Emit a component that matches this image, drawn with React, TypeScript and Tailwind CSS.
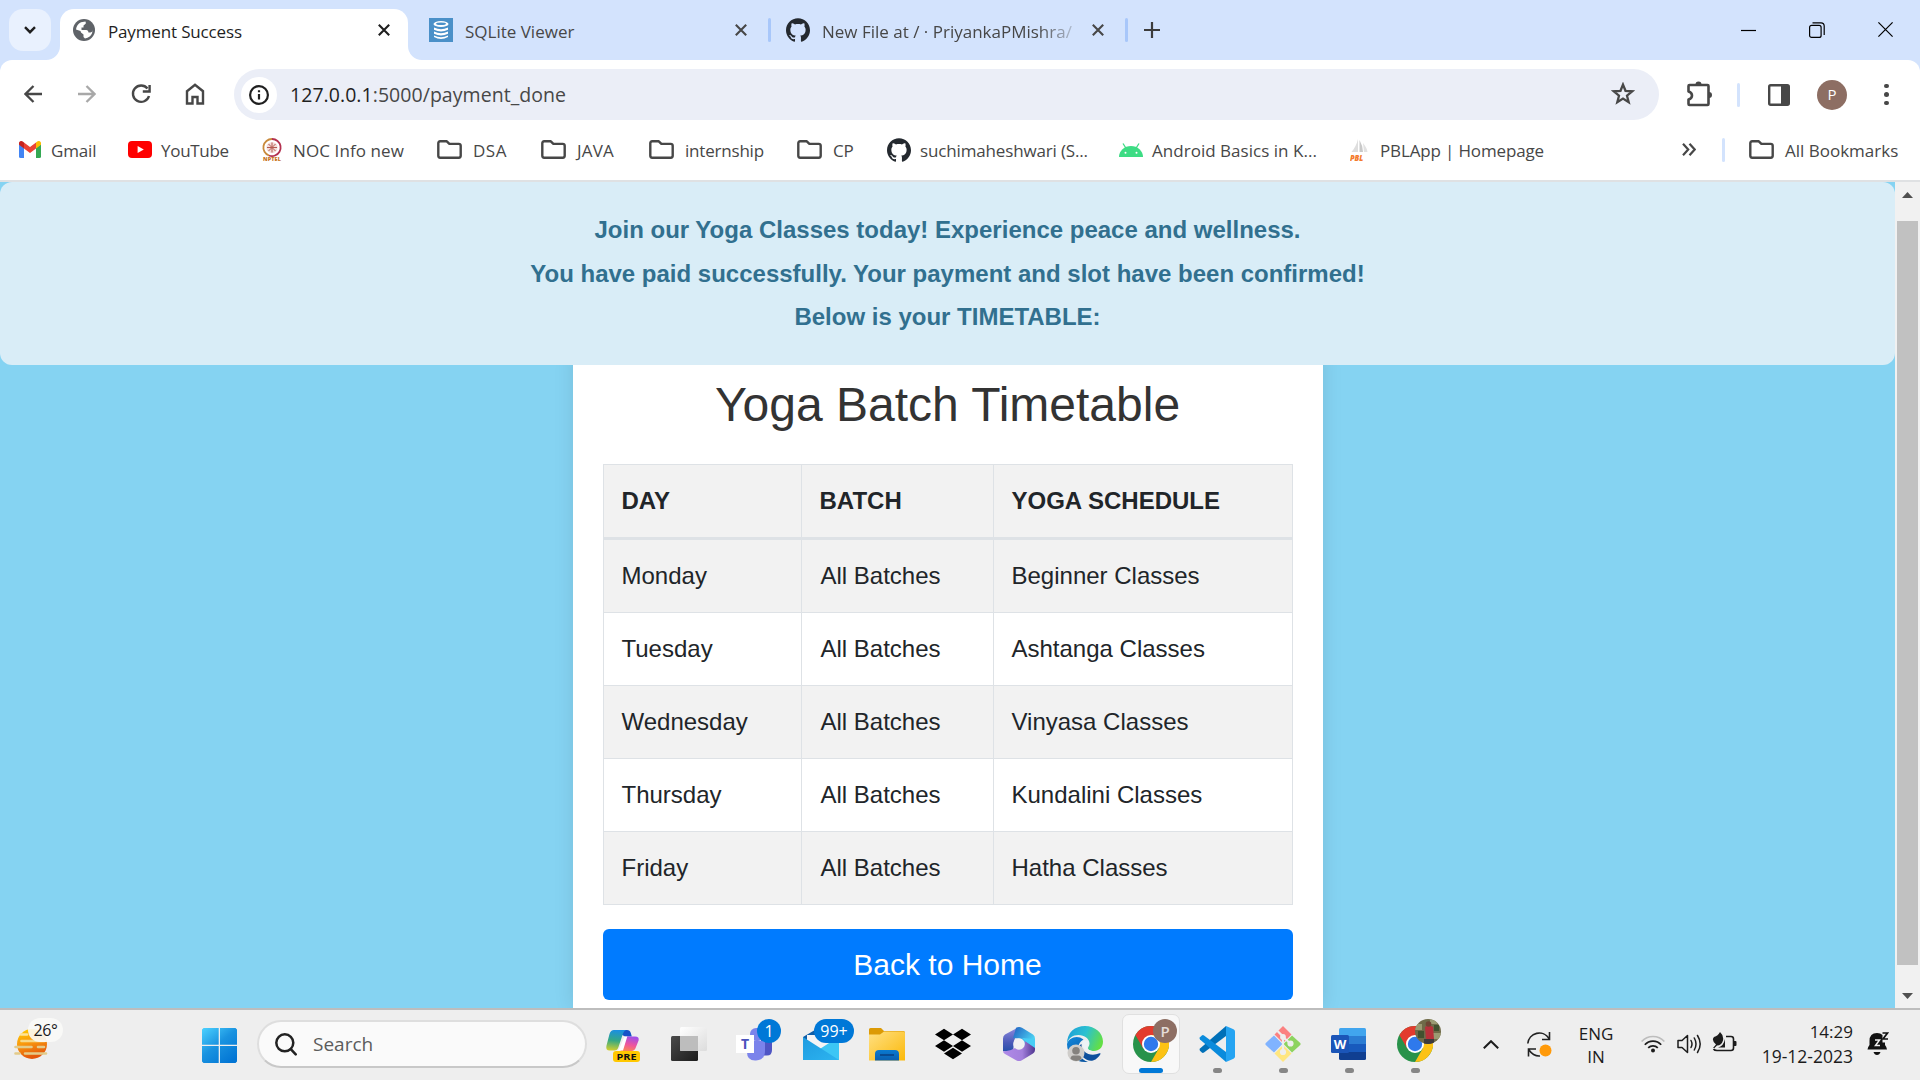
import React from "react";
import type { ReactNode } from "react";
import { SiGithub, SiDropbox } from "react-icons/si";

/* ---------- Small drawings ---------- */

function Cross({ className }: { className: string }) {
  return (
    <svg viewBox="0 0 12 12" className={className} fill="none" stroke="currentColor" strokeWidth="2.1">
      <path d="M.8.8l10.4 10.4M11.2.8L.8 11.2" />
    </svg>
  );
}

function GlobeIcon() {
  return (
    <svg viewBox="0 0 22 22" className="size-[22px] shrink-0">
      <circle cx="11" cy="11" r="11" fill="#5f6368" />
      <path d="M3 10.500Q3.500 5.500 8 3.300L12.500 2.500 13 4.500 10.500 6.500V8.500H8.500V11H13.500Q15.500 11 15.500 13.500H17.500Q19.500 13 19.500 11 19.500 16.500 14.500 18.700L12 19.500 10.500 18V15.500L8 13.500 7.500 12z" fill="#fff" />
      <path d="M13 3.500Q18 5 19.300 10L16.500 9.500 14 8.500 12.500 6.500z" fill="#5f6368" />
    </svg>
  );
}

function Folder() {
  return (
    <svg viewBox="0 0 25 19" className="h-[19px] w-[25px] shrink-0" fill="none" stroke="#474747" strokeWidth="2.4" strokeLinejoin="round">
      <path d="M1.300 3.200V15.800q0 1.900 1.900 1.900H21.800q1.900 0 1.900-1.900V5.800q0-1.900-1.900-1.900H12.400L9.800 1.300H3.200q-1.900 0-1.900 1.900z" />
    </svg>
  );
}

function GmailIcon() {
  return (
    <svg viewBox="0 0 22 17" className="h-[17px] w-[22px]">
      <path d="M0 3v12.500Q0 17 1.500 17H5V7z" fill="#4285f4" />
      <path d="M22 3v12.500q0 1.500-1.500 1.500H17V7z" fill="#34a853" />
      <path d="M17 1.500V7.500l5-3.800V2.200C22 .2 19.800-.7 18.200.6z" fill="#fbbc04" />
      <path d="M5 7.500V1.500l6 4.500 6-4.500v6L11 12z" fill="#ea4335" />
      <path d="M0 2.200v1.500l5 3.800v-6L3.800.6C2.200-.7 0 .2 0 2.200z" fill="#c5221f" />
    </svg>
  );
}

function YouTubeIcon() {
  return (
    <svg viewBox="0 0 24 17" className="h-[17px] w-[24px]">
      <rect width="24" height="17" rx="4" fill="#f00" />
      <path d="M9.600 4.900v7.200l6.200-3.600z" fill="#fff" />
    </svg>
  );
}

function NptelIcon() {
  return (
    <svg viewBox="0 0 22 24" className="h-[24px] w-[22px] overflow-visible">
      <path d="M11 1a8.500 8.500 0 0 0-3 16.500" fill="none" stroke="#c98a3c" strokeWidth="1.800" />
      <path d="M11 1a8.500 8.500 0 0 1 3 16.500q-3 1.200-6 0" fill="none" stroke="#b3304f" strokeWidth="1.800" />
      <circle cx="11" cy="9.500" r="5.600" fill="#f3dcd9" />
      <path d="M11 4.500v10M6 9.500h10M7.500 6l7 7M14.500 6l-7 7" stroke="#b5594f" strokeWidth="1" />
      <text x="11" y="23.400" textAnchor="middle" textLength="18" lengthAdjust="spacingAndGlyphs" className="font-['Open_Sans'] text-[5.500px] font-extrabold" fill="#c8741c">NPTEL</text>
    </svg>
  );
}

function AndroidIcon() {
  return (
    <svg viewBox="0 0 24 14" className="h-[14px] w-[24px]">
      <path d="M0 14a12 11 0 0 1 24 0z" fill="#3ddc84" />
      <path d="M4 .5l3.200 5M20 .5l-3.200 5" stroke="#3ddc84" strokeWidth="1.300" />
      <circle cx="6.500" cy="9.700" r="1" fill="#fff" />
      <circle cx="17.500" cy="9.700" r="1" fill="#fff" />
    </svg>
  );
}

function PblIcon() {
  return (
    <svg viewBox="0 0 18 22" className="h-[22px] w-[18px]">
      <path d="M8 0v13H1.500Q6 8 8 0z" fill="#dedede" />
      <path d="M9.500 1q3.500 6 3.500 12H9.500z" fill="#c9c9c9" />
      <path d="M13 4q4 5 4.500 9H14z" fill="#e2e2e2" />
      <text x="0" y="21.500" textLength="13" lengthAdjust="spacingAndGlyphs" className="font-['Open_Sans'] text-[8px] font-extrabold italic" fill="#f47a2c">PBL</text>
    </svg>
  );
}

function WeatherIcon() {
  return (
    <svg viewBox="0 0 36 32" className="h-[32px] w-[36px]">
      <defs>
        <linearGradient id="sun" x1="0" y1="0" x2=".3" y2="1">
          <stop offset="0" stopColor="#ffcf00" />
          <stop offset=".5" stopColor="#f99a0e" />
          <stop offset="1" stopColor="#e4570c" />
        </linearGradient>
      </defs>
      <circle cx="18" cy="16" r="15" fill="url(#sun)" />
      <g stroke="#e3cb8a" strokeWidth="2.600" strokeLinecap="round">
        <path d="M7 6.500h6" stroke="#fde59a" />
        <path d="M7.500 13h23" stroke="#f7d98a" />
        <path d="M1.500 19h16M24 19h6M1.500 25.500h4M11 25.500h21" />
      </g>
    </svg>
  );
}

function WindowsLogo() {
  return (
    <svg viewBox="0 0 35 35" className="h-[35px] w-[35px]">
      <defs>
        <linearGradient id="win" gradientUnits="userSpaceOnUse" x1="0" y1="0" x2="28" y2="35">
          <stop offset="0" stopColor="#4cd2ff" />
          <stop offset=".5" stopColor="#1a93e0" />
          <stop offset="1" stopColor="#0275d4" />
        </linearGradient>
      </defs>
      <path d="M1.500 0H16.700V16.700H0V1.500zM18 0h15.500L35 1.500V16.700H18zM0 18H16.700V35H1.500L0 33.500zM18 18H35V33.500L33.500 35H18z" fill="url(#win)" />
    </svg>
  );
}

function CopilotIcon() {
  return (
    <svg viewBox="0 0 36 36" className="h-[36px] w-[36px]">
      <defs>
        <linearGradient id="cpA" x1=".3" y1="0" x2=".2" y2="1">
          <stop offset="0" stopColor="#1b8fe0" />
          <stop offset=".5" stopColor="#35a883" />
          <stop offset="1" stopColor="#d5cf2c" />
        </linearGradient>
        <linearGradient id="cpB" x1=".6" y1="0" x2=".3" y2="1">
          <stop offset="0" stopColor="#a04ee8" />
          <stop offset=".55" stopColor="#f0569b" />
          <stop offset="1" stopColor="#fb8b50" />
        </linearGradient>
      </defs>
      <path d="M8 4h14q3 0 3.800 3l1 3.500H20z" fill="#1752c8" />
      <path d="M20 10.500h10q4.500 0 3.600 4L31 21q-1.200 4-4.600 4H14q3 0 4-4z" fill="url(#cpB)" />
      <path d="M9 4h12q-2 .5-3 3.500L13.500 21q-1 3.500-4 3.500H4.600Q.6 24.500 1.400 20L4.500 8Q5.700 4 9 4z" fill="url(#cpA)" />
      <path d="M19.500 10.500h2.800L18 24.500h-6q2 0 3-3.500z" fill="#fff" />
      <rect x="8" y="25" width="27" height="11" rx="3" fill="#ffc800" />
      <text x="21.500" y="33.800" textAnchor="middle" textLength="20" lengthAdjust="spacingAndGlyphs" className="font-['Open_Sans'] text-[9px] font-bold" fill="#111">PRE</text>
    </svg>
  );
}

function TaskViewIcon() {
  return (
    <svg viewBox="0 0 36 36" className="h-[36px] w-[36px]">
      <defs>
        <linearGradient id="tvA" x1="0" y1="0" x2="1" y2="1">
          <stop offset="0" stopColor="#4a4a4a" />
          <stop offset="1" stopColor="#1c1c1c" />
        </linearGradient>
        <linearGradient id="tvB" x1="0" y1="0" x2="1" y2="1">
          <stop offset="0" stopColor="#fff" />
          <stop offset="1" stopColor="#dcdcdc" />
        </linearGradient>
      </defs>
      <rect x="0" y="10" width="27" height="25" rx="1.500" fill="url(#tvA)" />
      <rect x="9" y="1" width="27" height="24" rx="1.500" fill="url(#tvB)" />
      <path d="M9 10H27V25H10.500Q9 25 9 23.500z" fill="#bdbdbd" />
    </svg>
  );
}

function TeamsIcon() {
  return (
    <svg viewBox="0 0 36 36" className="h-[36px] w-[36px] overflow-visible">
      <rect x="13" y="2" width="14" height="13" rx="6" fill="#7b83eb" />
      <path d="M24 12H35V24q0 5.500-5 5.500h-6z" fill="#4f55c4" />
      <path d="M10 15H28V25q0 9-9 9.500T10 26z" fill="#7b83eb" />
      <rect x="-1" y="9" width="18" height="18" fill="#fff" />
      <text x="8" y="23" textAnchor="middle" className="font-['Open_Sans'] text-[14px] font-bold" fill="#4b53bc">T</text>
    </svg>
  );
}

function MailIcon() {
  return (
    <svg viewBox="0 0 36 36" className="h-[36px] w-[36px]">
      <defs>
        <linearGradient id="mailA" x1="0" y1="0" x2="1" y2="1">
          <stop offset="0" stopColor="#1f9be0" />
          <stop offset="1" stopColor="#2cb4f0" />
        </linearGradient>
      </defs>
      <path d="M0 11L17 1 36 11V20H0z" fill="#0f5ea8" />
      <path d="M4 9H33V20L18 25 4 14z" fill="#f4f4f6" />
      <path d="M36 10.500V34H0z" fill="#3cc6f5" />
      <path d="M0 11L36 34H0z" fill="url(#mailA)" />
    </svg>
  );
}

function ExplorerIcon() {
  return (
    <svg viewBox="0 0 36 36" className="h-[36px] w-[36px]">
      <defs>
        <linearGradient id="fe" x1="0" y1="0" x2="1" y2="1">
          <stop offset="0" stopColor="#ffe083" />
          <stop offset="1" stopColor="#fbb90a" />
        </linearGradient>
        <linearGradient id="feB" x1="0" y1="0" x2="0" y2="1">
          <stop offset="0" stopColor="#0a7ad0" />
          <stop offset="1" stopColor="#0a5fb0" />
        </linearGradient>
      </defs>
      <path d="M0 3.500Q0 2 1.500 2H12l3 3H34.500Q36 5 36 6.500V12H0z" fill="#dc9a05" />
      <path d="M0 8.500H11L15 5.500H34.500Q36 5.500 36 7V34.500H0z" fill="url(#fe)" />
      <path d="M6 34.500V28q0-4 4-4H26q4 0 4 4v6.500z" fill="url(#feB)" />
      <path d="M11 29H25" stroke="#0a3f80" strokeWidth="1.500" />
    </svg>
  );
}

function M365Icon() {
  return (
    <svg viewBox="0 0 36 36" className="h-[36px] w-[36px]">
      <defs>
        <linearGradient id="m1" x1="0" y1="0" x2="0" y2="1">
          <stop offset="0" stopColor="#8f8be0" />
          <stop offset=".6" stopColor="#4a5ab8" />
          <stop offset="1" stopColor="#1f4ea8" />
        </linearGradient>
        <linearGradient id="m2" x1="0" y1="0" x2="1" y2=".7">
          <stop offset="0" stopColor="#1f5fc0" />
          <stop offset="1" stopColor="#52e0fa" />
        </linearGradient>
        <linearGradient id="m3" x1="0" y1="0" x2="1" y2="0">
          <stop offset="0" stopColor="#b08be8" />
          <stop offset=".6" stopColor="#a37fdc" />
          <stop offset="1" stopColor="#4f3690" />
        </linearGradient>
      </defs>
      <path d="M18 1L4 8.500Q2 10 2 12.500V25l10 2L13 15z" fill="url(#m1)" />
      <path d="M15 2q3-2 6-.3L32 8.500q2 1.500 2 4V23L23 20l-2-7-9-1z" fill="url(#m2)" />
      <path d="M2 25q6 1 12-3l9-1 1-6 10 6v3q0 2-2 3.500L20.500 34.500q-2.500 1-5 0L4 28Q2 27 2 25z" fill="url(#m3)" />
      <path d="M34 13V22L24 15l-3-3z" fill="#48cdf5" />
      <circle cx="18" cy="18" r="5.800" fill="#f0f0f2" />
    </svg>
  );
}

function EdgeIcon() {
  return (
    <svg viewBox="0 0 36 36" className="h-[36px] w-[36px] overflow-visible">
      <defs>
        <linearGradient id="eA" x1="0" y1=".2" x2="1" y2=".5">
          <stop offset="0" stopColor="#1e9fd8" />
          <stop offset=".5" stopColor="#2bc1d0" />
          <stop offset="1" stopColor="#63df45" />
        </linearGradient>
        <linearGradient id="eB" x1="0" y1="0" x2=".6" y2="1">
          <stop offset="0" stopColor="#1188dd" />
          <stop offset="1" stopColor="#0c59a4" />
        </linearGradient>
      </defs>
      <path d="M0 18C0 6 8 0 18 0s18 7 18 15.500c0 6-4 9.500-9 9.500-4.500 0-6-1.800-6-3s1.500-2 1.500-4.500c0-4.500-5-8.500-11-8.500C5.500 9 1.500 12 0 18z" fill="url(#eA)" />
      <path d="M0 18c0 10.500 8 18 18 18h3C13 33 11 27 11 23q0-6.500 5.500-9.500C10 8 1.500 12 0 18z" fill="url(#eB)" />
      <path d="M12 21c0 9 8 15 14 13.500 3.500-1 6-4 7.500-6.500q.5-1-1-.8C24 31 14 27 14.500 18q-2.500 1-2.500 3z" fill="#0d4f9c" />
      <path d="M15.500 15q4-2 6 1 .5 2.500-1 4.500-1.500 2.500 2.500 4l4 .8q-6 1.500-9-1.800-3.500-4-2.500-8.500z" fill="#eef3f6" />
      <circle cx="9" cy="27" r="8.500" fill="#cfcdca" />
      <circle cx="9" cy="24.800" r="3.800" fill="#85827e" />
      <path d="M3.500 33q0-3.500 3-3.500h5q3 0 3 3.500-5 4-11 0z" fill="#85827e" />
    </svg>
  );
}

function ChromeIcon() {
  return (
    <svg viewBox="0 0 36 36" className="h-[36px] w-[36px]">
      <circle cx="18" cy="18" r="18" fill="#28924a" />
      <path d="M33.590 9A18 18 0 0 1 18 36L25.800 22.500 18 9z" fill="#fcc214" />
      <path d="M2.410 9A18 18 0 0 1 33.590 9H18L10.200 22.500z" fill="#e33b2e" />
      <circle cx="18" cy="18" r="9" fill="#fff" />
      <circle cx="18" cy="18" r="7.200" fill="#2f79ec" />
    </svg>
  );
}

function VSCodeIcon() {
  return (
    <svg viewBox="0 0 36 36" className="h-[36px] w-[36px]">
      <path d="M27 0L1 22.500q-1 1.200 0 2.300l1.800 1.800q1 .8 2.200 0L27 10z" fill="#0070b8" />
      <path d="M27 36L1 13.500q-1-1.200 0-2.300L2.800 9.400Q3.800 8.600 5 9.400L27 26z" fill="#0a8bdc" />
      <path d="M27 0l7.500 3.200Q36 4 36 5.500v25q0 1.500-1.500 2.300L27 36z" fill="#25a4f2" />
    </svg>
  );
}

function GitIcon() {
  return (
    <svg viewBox="0 0 36 36" className="h-[36px] w-[36px]">
      <path d="M18 0l8.500 8.500L18 17 9.500 8.500z" fill="#fb8181" />
      <path d="M9 9.500l8.500 8.500L9 26.500.5 18.800v-1.600z" fill="#80b3ff" />
      <path d="M27 9.500l8.500 7.700v1.600L27 26.500 18.500 18z" fill="#8dd35f" />
      <path d="M18 19l8.500 8.500L18 36l-8.500-8.500z" fill="#ffe680" />
      <g stroke="#eee" strokeWidth="2.200" fill="#eee">
        <path d="M12.500 5L18 10.500V27M18 11l8 7" fill="none" />
        <circle cx="18" cy="11" r="1.800" />
        <circle cx="18" cy="26" r="2" />
        <circle cx="25.500" cy="17.500" r="2" />
      </g>
    </svg>
  );
}

function WordIcon() {
  return (
    <svg viewBox="0 0 36 36" className="h-[36px] w-[36px]">
      <path d="M8 3.500Q8 2 9.500 2h24Q35 2 35 3.500V10H8z" fill="#41a5ee" />
      <path d="M8 10H35v8H8z" fill="#2b7cd3" />
      <path d="M8 18H35v8H8z" fill="#185abd" />
      <path d="M8 26H35v6.500q0 1.500-1.500 1.500h-24Q8 34 8 32.500z" fill="#103f91" />
      <rect x="0" y="9" width="18" height="18" rx="1.500" fill="#1b55b8" />
      <text x="9" y="22.800" textAnchor="middle" className="font-['Open_Sans'] text-[13px] font-bold" fill="#fff">W</text>
    </svg>
  );
}

/* ---------- Browser chrome ---------- */

function TabStrip() {
  return (
    <div className="flex h-[60px] bg-[#d3e3fd] text-[17px] text-[#474747]">
      <div className="mt-[9px] ml-[9px] flex h-[42px] w-[42px] items-center justify-center rounded-[14px] bg-[#e9f1fe]">
        <svg viewBox="0 0 12 8" className="h-[8px] w-[12px]" fill="none" stroke="#1f1f1f" strokeWidth="2.4">
          <path d="M1 1.200l5 5 5-5" />
        </svg>
      </div>
      <svg viewBox="0 0 14 14" className="ml-[-5px] h-[14px] w-[14px] self-end">
        <path d="M14 0V14H0A14 14 0 0 0 14 0z" fill="#fff" />
      </svg>
      <div className="mt-[9px] flex h-[51px] w-[348px] items-center rounded-t-[14px] bg-white pb-[9px] pl-[13px] text-[#1f1f1f]">
        <GlobeIcon />
        <span className="mt-[3px] ml-[13px] w-[222px] tracking-[-0.15px] whitespace-nowrap">Payment Success</span>
        <Cross className="ml-[48px] size-[12px]" />
      </div>
      <svg viewBox="0 0 14 14" className="h-[14px] w-[14px] self-end">
        <path d="M0 0V14H14A14 14 0 0 1 0 0z" fill="#fff" />
      </svg>
      <div className="ml-[7px] flex h-[60px] w-[341px] items-center">
        <svg viewBox="0 0 24 24" className="size-[24px] shrink-0">
          <rect width="24" height="24" fill="#4a90c8" />
          <ellipse cx="12" cy="6" rx="7.500" ry="3" fill="#fff" />
          <path d="M5 9.500q7 3.600 14 0v2.300q-7 3.600-14 0zM5 13.500q7 3.600 14 0v2.300q-7 3.600-14 0zM5 17.500q7 3.600 14 0v1.500q-7 4-14 0z" fill="#fff" />
          <ellipse cx="12" cy="5.800" rx="5" ry="1.200" fill="#4a90c8" />
        </svg>
        <span className="mt-[3px] ml-[12px] w-[258px] shrink-0 whitespace-nowrap">SQLite Viewer</span>
        <Cross className="ml-[12px] size-[12px] shrink-0" />
        <span className="ml-[21px] h-[24px] w-[3px] shrink-0 rounded-full bg-[#a8c7fa]" />
      </div>
      <div className="ml-[16px] flex h-[60px] items-center">
        <SiGithub className="size-[24px] text-[#24292f]" />
        <span className="mt-[3px] ml-[12px] w-[251px] overflow-hidden whitespace-nowrap [mask-image:linear-gradient(to_right,black_215px,transparent_262px)]">
          New File at / · PriyankaPMishra/
        </span>
        <Cross className="ml-[19px] size-[12px]" />
        <span className="ml-[21px] h-[24px] w-[3px] rounded-full bg-[#a8c7fa]" />
        <svg viewBox="0 0 16 16" className="ml-[16px] size-[16px]" stroke="#3c3c3c" strokeWidth="2.200">
          <path d="M8 0v16M0 8h16" />
        </svg>
      </div>
      <div className="mr-[27px] ml-auto flex h-[59px] items-center gap-[53px] text-black">
        <svg viewBox="0 0 15 16" className="h-[16px] w-[15px]" stroke="currentColor" strokeWidth="1.200">
          <path d="M0 8.500h15" />
        </svg>
        <svg viewBox="0 0 16 16" className="size-[16px]" fill="none" stroke="currentColor" strokeWidth="1.200">
          <rect x=".6" y="3.400" width="11.500" height="12" rx="2" />
          <path d="M3.500.9h8.500q3.200 0 3.200 3.200v9" />
        </svg>
        <svg viewBox="0 0 15 15" className="size-[15px]" stroke="currentColor" strokeWidth="1.200">
          <path d="M.4.4l14.200 14.200M14.600.4L.4 14.600" />
        </svg>
      </div>
    </div>
  );
}

function Toolbar() {
  return (
    <div className="bg-[#d3e3fd]">
      <div className="flex h-[69px] items-center rounded-t-[12px] bg-white text-[#474747]">
        <div className="ml-[24px] flex gap-[36px]">
          <svg viewBox="0 0 18 18" className="size-[18px]" fill="none" stroke="currentColor" strokeWidth="2.300">
            <path d="M18 9H1.500M9.500 1L1.500 9l8 8" />
          </svg>
          <svg viewBox="0 0 18 18" className="size-[18px]" fill="none" stroke="#a8a8a8" strokeWidth="2.300">
            <path d="M0 9h16.500M8.500 1l8 8-8 8" />
          </svg>
          <svg viewBox="0 0 18 18" className="size-[18px] overflow-visible" fill="none" stroke="currentColor" strokeWidth="2.400">
            <path d="M15.500 3.500A8.200 8.200 0 1 0 17 11" />
            <path d="M17.600 0V6.500H10.800" />
          </svg>
          <svg viewBox="0 0 18 20" className="-mt-px h-[20px] w-[18px] overflow-visible" fill="none" stroke="currentColor" strokeWidth="2.400">
            <path d="M1 7.200L9 .8l8 6.400V19.500H11.500v-6.500h-5v6.500H1z" />
          </svg>
        </div>
        <div className="ml-[30px] flex h-[51px] w-[1425px] items-center rounded-full bg-[#ebeef7] pl-[7px]">
          <div className="flex size-[36px] items-center justify-center rounded-full bg-white">
            <svg viewBox="0 0 20 20" className="size-[20px]" fill="none" stroke="#1f1f1f" strokeWidth="2.200">
              <circle cx="10" cy="10" r="8.900" />
              <path d="M10 9v5.500M10 5.300v2" />
            </svg>
          </div>
          <span className="ml-[13px] text-[19.5px] tracking-[0.05px] text-[#474747]">
            <span className="text-[#1f1f1f]">127.0.0.1</span>:5000/payment_done
          </span>
          <svg viewBox="0 0 24 23" className="mr-[24px] ml-auto h-[23px] w-[24px] -translate-y-px" fill="none" stroke="currentColor" strokeWidth="2.300">
            <path d="M12 2.600L14.500 8.800 21.200 9.300 16 13.700 17.700 20.200 12 16.600 6.300 20.200 8 13.700 2.800 9.300 9.500 8.800z" />
          </svg>
        </div>
        <svg viewBox="0 0 26 26" className="ml-[28px] size-[26px] -translate-y-px" fill="none" stroke="currentColor" strokeWidth="2.600" strokeLinejoin="round">
          <path d="M2.500 4H20.500q1 0 1 1V23q0 1-1 1H2.500q-1 0-1-1V18.500q3.500-1 3.500-4t-3.500-4V5q0-1 1-1z" />
          <path d="M8.500 3.500a3 3 0 0 1 6 0zM22 11a3 3 0 0 1 0 6z" fill="currentColor" stroke="none" />
        </svg>
        <span className="ml-[24px] h-[24px] w-[3px] rounded-full bg-[#d3e3fd]" />
        <svg viewBox="0 0 22 22" className="ml-[28px] size-[22px]" fill="none" stroke="currentColor" strokeWidth="2.400">
          <rect x="1.200" y="1.200" width="19.600" height="19.600" rx="1.500" />
          <path d="M13 1h8v20h-8z" fill="currentColor" stroke="none" />
        </svg>
        <div className="ml-[27px] flex size-[30px] items-center justify-center rounded-full bg-[#8d6e63] text-[15px] text-white">P</div>
        <div className="ml-[37px] flex flex-col gap-[4px]">
          <span className="size-[4.500px] rounded-full bg-[#474747]" />
          <span className="size-[4.500px] rounded-full bg-[#474747]" />
          <span className="size-[4.500px] rounded-full bg-[#474747]" />
        </div>
      </div>
    </div>
  );
}

function Bookmark({ icon, className, children }: { icon: ReactNode; className: string; children: ReactNode }) {
  return (
    <div className={"flex shrink-0 items-center whitespace-nowrap " + className}>
      {icon}
      <span className="mt-[2px]">{children}</span>
    </div>
  );
}

function BookmarksBar() {
  return (
    <div className="flex h-[53px] items-center border-b-2 border-[#dfe1e3] bg-white pb-[10px] text-[17px] tracking-[-0.15px] text-[#474747]">
      <Bookmark icon={<GmailIcon />} className="ml-[19px] w-[109px] gap-[10px]">Gmail</Bookmark>
      <Bookmark icon={<YouTubeIcon />} className="w-[133px] gap-[9px] tracking-[-0.3px]">YouTube</Bookmark>
      <Bookmark icon={<NptelIcon />} className="w-[176px] gap-[10px] tracking-[0.1px]">NOC Info new</Bookmark>
      <Bookmark icon={<Folder />} className="w-[104px] gap-[11px] tracking-[0.5px]">DSA</Bookmark>
      <Bookmark icon={<Folder />} className="w-[108px] gap-[11px] tracking-[0.2px]">JAVA</Bookmark>
      <Bookmark icon={<Folder />} className="w-[148px] gap-[11px] tracking-[-0.2px]">internship</Bookmark>
      <Bookmark icon={<Folder />} className="w-[90px] gap-[11px]">CP</Bookmark>
      <Bookmark icon={<SiGithub className="size-[24px] text-[#24292f]" />} className="w-[232px] gap-[9px]">suchimaheshwari (S...</Bookmark>
      <Bookmark icon={<AndroidIcon />} className="w-[231px] gap-[9px] tracking-[0.03px]">Android Basics in K...</Bookmark>
      <Bookmark icon={<PblIcon />} className="gap-[12px]">PBLApp | Homepage</Bookmark>
      <svg viewBox="0 0 14 13" className="ml-auto h-[13px] w-[14px]" fill="none" stroke="#474747" strokeWidth="2.200">
        <path d="M1 .8l5.200 5.700L1 12.200M7.500.8l5.200 5.700-5.200 5.700" />
      </svg>
      <span className="ml-[26px] h-[24px] w-[3px] rounded-full bg-[#d3e3fd]" />
      <Bookmark icon={<Folder />} className="ml-[24px] w-[171px] gap-[11px]">
        <span className="tracking-normal">All Bookmarks</span>
      </Bookmark>
    </div>
  );
}

/* ---------- Web page ---------- */

const rows = [
  ["Monday", "Beginner Classes"],
  ["Tuesday", "Ashtanga Classes"],
  ["Wednesday", "Vinyasa Classes"],
  ["Thursday", "Kundalini Classes"],
  ["Friday", "Hatha Classes"],
];

function Timetable() {
  return (
    <div className="border border-[#dee2e6] text-[24px] text-[#212529]">
      <div className="grid h-[75px] grid-cols-[197px_192px_1fr] items-stretch border-b-[3px] border-[#dee2e6] bg-[#f2f2f2] font-bold">
        <div className="flex items-center pl-[18px]">DAY</div>
        <div className="flex items-center border-l border-[#dee2e6] pl-[18px]">BATCH</div>
        <div className="flex items-center border-l border-[#dee2e6] pl-[18px]">YOGA SCHEDULE</div>
      </div>
      {rows.map(([day, schedule]) => (
        <div key={day} className="grid h-[73px] grid-cols-[197px_192px_1fr] border-b border-[#dee2e6] last:h-[72px] last:border-b-0 odd:bg-white even:bg-[#f2f2f2]">
          <div className="flex items-center pl-[18px]">{day}</div>
          <div className="flex items-center border-l border-[#dee2e6] pl-[19px]">All Batches</div>
          <div className="flex items-center border-l border-[#dee2e6] pl-[18px]">{schedule}</div>
        </div>
      ))}
    </div>
  );
}

function Page() {
  return (
    <div className="flex h-[826px] font-['Liberation_Sans',Arial,sans-serif]">
      <div className="flex h-full w-[1895px] flex-col overflow-hidden bg-[#85d3f2]">
        <div className="relative z-10 h-[183px] shrink-0 rounded-[12px] bg-[#d9edf7] pt-[26px] text-center text-[24px] leading-[43.500px] font-bold text-[#31708f]">
          <p>Join our Yoga Classes today! Experience peace and wellness.</p>
          <p>You have paid successfully. Your payment and slot have been confirmed!</p>
          <p>Below is your TIMETABLE:</p>
        </div>
        <div className="mx-auto -mt-[12px] w-[750px] flex-1 bg-white px-[30px] pt-[22px] shadow-[0_0_19px_rgba(0,0,0,0.1)]">
          <h1 className="h-[89px] text-center text-[48px] leading-[60px] text-[#333]">Yoga Batch Timetable</h1>
          <Timetable />
          <div className="mt-[24px] flex h-[71px] items-center justify-center rounded-[6px] bg-[#007bff] text-[30px] text-white">Back to Home</div>
        </div>
      </div>
      <div className="flex w-[25px] flex-col items-center bg-[#f1f1f1]">
        <svg viewBox="0 0 11 6" className="mt-[10px] h-[6px] w-[11px]" fill="#505050">
          <path d="M5.500 0L11 6H0z" />
        </svg>
        <div className="mt-[23px] h-[744px] w-[21px] bg-[#c1c1c1]" />
        <svg viewBox="0 0 11 6" className="mt-[28px] h-[6px] w-[11px]" fill="#505050">
          <path d="M0 0H11L5.500 6z" />
        </svg>
      </div>
    </div>
  );
}

/* ---------- Taskbar ---------- */

function TaskItem({ children, running, active }: { children: ReactNode; running?: boolean; active?: boolean }) {
  return (
    <div className="relative flex h-[70px] w-[66px] items-center justify-center">
      <div className={active ? "mt-[-2px] flex h-[60px] w-[58px] items-center justify-center rounded-[7px] border border-[#e0e0e0] bg-[#f8f8f8] pb-px" : "flex pb-[2px]"}>{children}</div>
      {running && <span className="absolute bottom-[7px] h-[5px] w-[9px] rounded-full bg-[#868686]" />}
      {active && <span className="absolute bottom-[7px] h-[5px] w-[24px] rounded-full bg-[#0078d7]" />}
    </div>
  );
}

function Taskbar() {
  return (
    <div className="flex h-[72px] items-center border-t-2 border-[#bdbdbd] bg-[#eee] text-[17px] text-[#1c1c1c]">
      <div className="relative ml-[14px] w-[188px] -translate-y-px">
        <WeatherIcon />
        <span className="absolute -top-[10px] left-[14px] flex h-[24px] w-[35px] items-center justify-center rounded-full bg-[#f9f9f7]/90 text-[16px] tracking-[-0.4px]">26°</span>
      </div>
      <WindowsLogo />
      <div className="ml-[20px] flex h-[48px] w-[330px] -translate-y-px items-center rounded-full border-2 border-[#dedede] border-b-[#c8c8c8] bg-[#fafafa] pl-[16px]">
        <svg viewBox="0 0 22 23" className="h-[23px] w-[22px]" fill="none" stroke="#222" strokeWidth="2.500" strokeLinecap="round">
          <circle cx="9.800" cy="9.800" r="8.500" />
          <path d="M15.800 16.200l4.900 5.200" />
        </svg>
        <span className="ml-[16px] text-[19px] text-[#5c5c5c]">Search</span>
      </div>
      <div className="ml-[3px] flex">
        <TaskItem><CopilotIcon /></TaskItem>
        <TaskItem><TaskViewIcon /></TaskItem>
        <TaskItem>
          <TeamsIcon />
          <span className="absolute top-[9px] left-[35px] flex size-[24px] items-center justify-center rounded-full bg-[#0078d7] text-[16px] text-white">1</span>
        </TaskItem>
        <TaskItem>
          <MailIcon />
          <span className="absolute top-[9px] left-[26px] flex h-[24px] w-[40px] items-center justify-center rounded-full bg-[#0078d7] text-[16px] text-white">99+</span>
        </TaskItem>
        <TaskItem><ExplorerIcon /></TaskItem>
        <TaskItem><SiDropbox className="size-[36px] text-black" /></TaskItem>
        <TaskItem><M365Icon /></TaskItem>
        <TaskItem><EdgeIcon /></TaskItem>
        <TaskItem active>
          <ChromeIcon />
          <span className="absolute top-[9px] left-[35px] flex size-[24px] items-center justify-center rounded-full bg-[#8d6e63] text-[15px] font-semibold text-[#e4dcd9]">P</span>
        </TaskItem>
        <TaskItem running><VSCodeIcon /></TaskItem>
        <TaskItem running><GitIcon /></TaskItem>
        <TaskItem running><WordIcon /></TaskItem>
        <TaskItem running>
          <ChromeIcon />
          <svg viewBox="0 0 26 25" className="absolute top-[9px] left-[33px] h-[25px] w-[26px]">
            <defs><clipPath id="photo"><ellipse cx="13" cy="12.500" rx="13" ry="12.500" /></clipPath></defs>
            <g clipPath="url(#photo)">
              <path d="M0 0H26V25H0z" fill="#6f6a48" />
              <path d="M0 5h7v6H0zM17 14h9v6h-9zM15 0h7v5h-7z" fill="#9a9a72" />
              <path d="M3 12h6v7H3zM19 6h5v6h-5z" fill="#41512f" />
              <path d="M10 8q4-3 8 0l1 12H11z" fill="#b8303a" />
              <circle cx="13.500" cy="5" r="2.800" fill="#6d4634" />
              <path d="M9 20h10v5H9z" fill="#3c3a3c" />
            </g>
          </svg>
        </TaskItem>
      </div>
      <svg viewBox="0 0 16 9" className="ml-[35px] h-[9px] w-[16px] -translate-y-px" fill="none" stroke="currentColor" strokeWidth="2">
        <path d="M.8 8.300L8 1.200l7.200 7.100" />
      </svg>
      <svg viewBox="0 0 25 25" className="ml-[28px] size-[25px] -translate-y-px" fill="none" stroke="#222" strokeWidth="1.600">
        <path d="M.8 11.500A11.500 11.500 0 0 1 22 6.500M22.500 0V7.500H15" />
        <path d="M1.500 24.500V17H9M2 18q4.500 6.500 11 6" />
        <circle cx="18.500" cy="18.500" r="6" fill="#ff9a0a" stroke="none" />
      </svg>
      <div className="ml-[22px] w-[44px] text-center leading-[23px]">
        <div>ENG</div>
        <div>IN</div>
      </div>
      <svg viewBox="0 0 24 18" className="ml-[23px] h-[18px] w-[24px] -translate-y-px" fill="none" stroke="currentColor" strokeWidth="1.700">
        <path d="M.6 6.500a15.500 15.500 0 0 1 22.800 0" stroke="#bdbdbd" />
        <path d="M3.800 9.700a11 11 0 0 1 16.400 0M7.200 12.900a6.600 6.600 0 0 1 9.600 0" />
        <circle cx="12" cy="15.500" r="2" fill="currentColor" stroke="none" />
      </svg>
      <svg viewBox="0 0 25 20" className="ml-[12px] h-[20px] w-[25px] -translate-y-px" fill="none" stroke="currentColor" strokeWidth="1.500" strokeLinejoin="round" strokeLinecap="round">
        <path d="M1 6.500h4L10.500 1.500v17L5 13.500H1z" />
        <path d="M14 6.500q2 3.500 0 7M17.300 4q3.400 6 0 12M20.500 1.500q5.400 8.500 0 17" />
      </svg>
      <svg viewBox="0 0 25 20" className="ml-[10px] h-[20px] w-[25px] -translate-y-[3px]" fill="none" stroke="currentColor" strokeWidth="1.600">
        <path d="M14 4.500h5q2.500 0 2.500 2.500v9q0 2.500-2.500 2.500H5q-2.500 0-3.500-1.500" />
        <path d="M22 9h1.500q1 0 1 1v3q0 1-1 1H22z" fill="currentColor" stroke="none" />
        <path d="M8 0q4 3.500 3 8.500Q9.500 13.500 5 13.500L2.500 16H1l3-3.500Q-1 8 2 5q4-1 6-5z" fill="currentColor" stroke="none" />
        <path d="M13 7v8.500H6q5.500-1 7-8.500z" fill="currentColor" stroke="none" />
      </svg>
      <div className="ml-[14px] w-[102px] -translate-y-px text-right leading-[24px]">
        <div>14:29</div>
        <div className="text-[17.500px]">19-12-2023</div>
      </div>
      <svg viewBox="0 0 22 24" className="ml-[14px] h-[24px] w-[22px] -translate-y-px" fill="#111">
        <path d="M10 1q3.500 0 5.500 2v14.500H.5q0-2 2-4.500V9q0-8 7.500-8zM15 10.500h3V13q2 2.500 2 4.500h-5zM6.500 20h7q-1 3-3.500 3t-3.500-3z" />
        <path d="M15.500 1h5l-4.500 6H21" fill="none" stroke="#111" strokeWidth="1.700" />
        <path d="M8 8h4.500L8.500 13.500h4.500" fill="none" stroke="#eee" strokeWidth="1.500" />
      </svg>
    </div>
  );
}

export default function App() {
  return (
    <div className="flex h-[1080px] w-[1920px] flex-col overflow-hidden bg-white font-['Open_Sans','Noto_Sans',sans-serif]">
      <TabStrip />
      <Toolbar />
      <BookmarksBar />
      <Page />
      <Taskbar />
    </div>
  );
}
